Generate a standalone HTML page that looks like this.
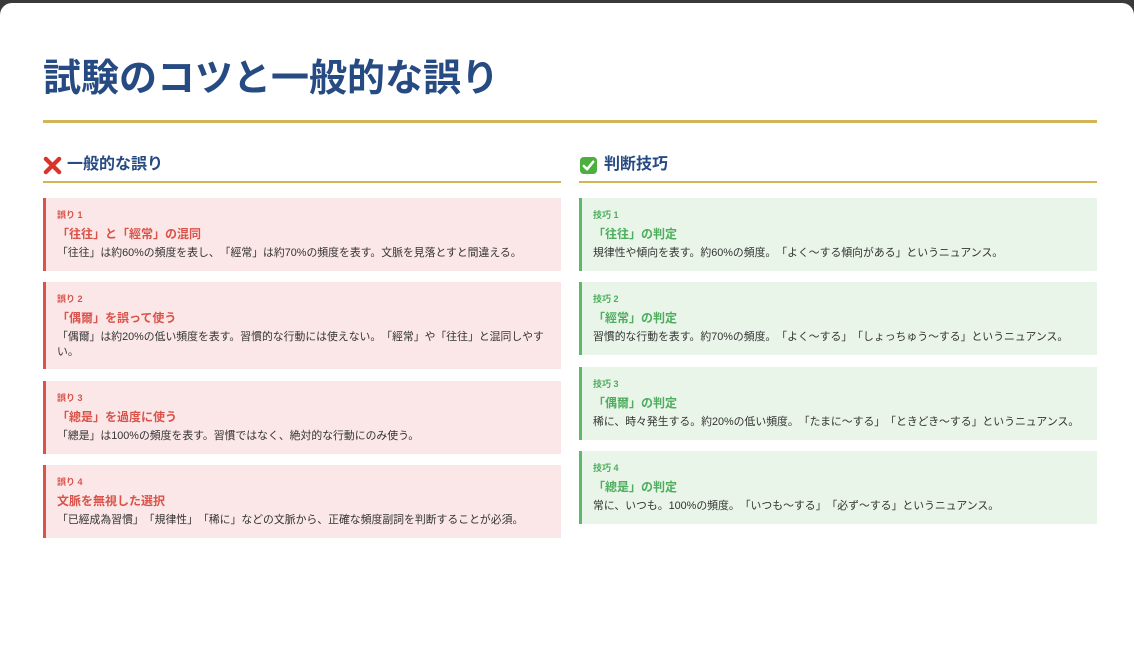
<!DOCTYPE html>
<html><head><meta charset="utf-8"><style>
*{margin:0;padding:0;box-sizing:border-box}
html,body{width:1134px;height:652px;overflow:hidden;background:#3a3a3a}
body{font-family:"Liberation Sans","Noto Sans CJK JP",sans-serif;text-spacing-trim:space-all}
.page{position:absolute;top:3px;left:0;width:1134px;height:649px;background:#fff;border-radius:12px 12px 0 0}
h1{position:absolute;left:43px;top:44px;font-size:38px;font-weight:bold;color:#264a82;white-space:nowrap}
.hr{position:absolute;left:43px;top:117px;width:1054px;height:3px;background:#d2b557}
.col{position:absolute;top:146px;width:518px}
.h2{font-size:16px;font-weight:bold;color:#264a82;height:34px;line-height:26px;border-bottom:2px solid #d2b557;display:flex;align-items:center}
.card{border-left:3px solid;padding:10px 6px 0 11px}
.lab{font-size:9px;font-weight:bold;line-height:12px;margin-top:1px}
.t{font-size:12px;font-weight:bold;line-height:16px;margin-top:5px}
.d{font-size:10.85px;color:#333;line-height:15px;margin-top:4px}
.red{background:#fbe7e7;border-color:#dd5349}
.red .lab,.red .t{color:#d9534a}
.grn{background:#e9f5e8;border-color:#5cb86a}
.grn .lab,.grn .t{color:#4fad5f}
</style></head><body><div class="page">
<h1>試験のコツと一般的な誤り</h1>
<div class="hr"></div>
<div class="col" style="left:43px">
<div class="h2"><svg width="19" height="19" viewBox="0 0 20 20" style="margin-right:5px"><path d="M3 3L17 17M17 3L3 17" stroke="#d9342b" stroke-width="4.5" stroke-linecap="round"/></svg>一般的な誤り</div>
<div class="card red" style="margin-top:15px;height:73px"><div class="lab">誤り 1</div><div class="t">「往往」と「經常」の混同</div><div class="d">「往往」は約60%の頻度を表し、「經常」は約70%の頻度を表す。文脈を見落とすと間違える。</div></div>
<div class="card red" style="margin-top:11px;height:87px"><div class="lab">誤り 2</div><div class="t">「偶爾」を誤って使う</div><div class="d">「偶爾」は約20%の低い頻度を表す。習慣的な行動には使えない。「經常」や「往往」と混同しやす<br>い。</div></div>
<div class="card red" style="margin-top:12px;height:73px"><div class="lab">誤り 3</div><div class="t">「總是」を過度に使う</div><div class="d">「總是」は100%の頻度を表す。習慣ではなく、絶対的な行動にのみ使う。</div></div>
<div class="card red" style="margin-top:11px;height:73px"><div class="lab">誤り 4</div><div class="t">文脈を無視した選択</div><div class="d">「已經成為習慣」「規律性」「稀に」などの文脈から、正確な頻度副詞を判断することが必須。</div></div>
</div>
<div class="col" style="left:579px">
<div class="h2"><svg width="19" height="19" viewBox="0 0 20 20" style="margin-right:6px"><rect x="1" y="1" width="18" height="18" rx="4" fill="#4caf3e"/><path d="M5 10.5L8.5 14L15 6" stroke="#fff" stroke-width="2.6" fill="none" stroke-linecap="round" stroke-linejoin="round"/></svg>判断技巧</div>
<div class="card grn" style="margin-top:15px;height:73px"><div class="lab">技巧 1</div><div class="t">「往往」の判定</div><div class="d">規律性や傾向を表す。約60%の頻度。「よく〜する傾向がある」というニュアンス。</div></div>
<div class="card grn" style="margin-top:11px;height:73px"><div class="lab">技巧 2</div><div class="t">「經常」の判定</div><div class="d">習慣的な行動を表す。約70%の頻度。「よく〜する」「しょっちゅう〜する」というニュアンス。</div></div>
<div class="card grn" style="margin-top:12px;height:73px"><div class="lab">技巧 3</div><div class="t">「偶爾」の判定</div><div class="d" style="white-space:nowrap">稀に、時々発生する。約20%の低い頻度。「たまに〜する」「ときどき〜する」というニュアンス。</div></div>
<div class="card grn" style="margin-top:11px;height:73px"><div class="lab">技巧 4</div><div class="t">「總是」の判定</div><div class="d">常に、いつも。100%の頻度。「いつも〜する」「必ず〜する」というニュアンス。</div></div>
</div>
</div></body></html>
